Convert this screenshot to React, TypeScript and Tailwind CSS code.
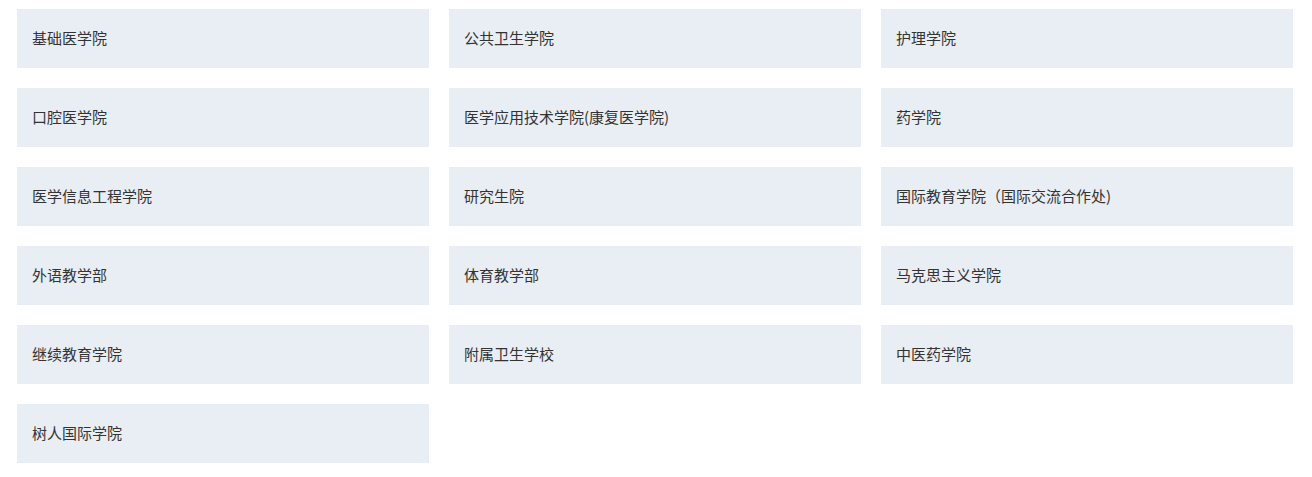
import React from 'react';

const colleges = [
  '基础医学院',
  '公共卫生学院',
  '护理学院',
  '口腔医学院',
  '医学应用技术学院(康复医学院)',
  '药学院',
  '医学信息工程学院',
  '研究生院',
  '国际教育学院（国际交流合作处)',
  '外语教学部',
  '体育教学部',
  '马克思主义学院',
  '继续教育学院',
  '附属卫生学校',
  '中医药学院',
  '树人国际学院',
];

const App: React.FC = () => {
  return (
    <div
      className="w-[1312px] h-[477px] bg-white pl-[17px] pt-[9px]"
      style={{ fontFamily: '"Microsoft YaHei", "Noto Sans CJK SC", sans-serif' }}
    >
      <ul className="grid grid-cols-[repeat(3,412px)] gap-x-5 gap-y-5">
        {colleges.map((name) => (
          <li key={name}>
            <a className="flex h-[59px] items-center bg-[#e9eef5] pb-[2px] pl-[15px] text-[15px] leading-none text-[#333333]">
              {name}
            </a>
          </li>
        ))}
      </ul>
    </div>
  );
};

export default App;
